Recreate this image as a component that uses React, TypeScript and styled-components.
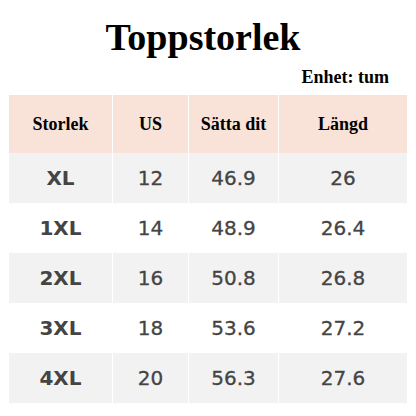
import React from "react";
import styled, { createGlobalStyle } from "styled-components";

const Global = createGlobalStyle`
  html, body { margin: 0; padding: 0; background: #ffffff; }
  body { width: 416px; height: 416px; overflow: hidden; }
`;

const Page = styled.div`
  width: 416px;
  height: 416px;
  box-sizing: border-box;
  padding: 18px 9px 0 9px;
  display: flex;
  flex-direction: column;
`;

const Title = styled.h1`
  margin: 0;
  padding-right: 10px;
  font-family: "Liberation Serif", "Times New Roman", serif;
  font-weight: 700;
  font-size: 38px;
  line-height: 38px;
  color: #000;
  text-align: center;
`;

const Unit = styled.div`
  margin-top: 12px;
  padding-right: 18px;
  font-family: "Liberation Serif", "Times New Roman", serif;
  font-weight: 700;
  font-size: 18px;
  line-height: 18px;
  color: #000;
  text-align: right;
`;

const Table = styled.div`
  margin-top: 9px;
  display: flex;
  flex-direction: column;
`;

const Row = styled.div<{ $head?: boolean }>`
  display: grid;
  grid-template-columns: 103px 75px 89px 128px;
  column-gap: 1px;
  height: ${(p) => (p.$head ? 58 : 50)}px;
`;

const Cell = styled.div<{ $bg: string; $head?: boolean; $bold?: boolean }>`
  background: ${(p) => p.$bg};
  display: flex;
  align-items: center;
  justify-content: center;
  font-family: ${(p) =>
    p.$head ? `"Liberation Serif", "Times New Roman", serif` : `"DejaVu Sans", sans-serif`};
  font-weight: ${(p) => (p.$head || p.$bold ? 700 : 400)};
  font-size: ${(p) => (p.$head ? 18 : 20)}px;
  color: ${(p) => (p.$head ? "#000" : "#444444")};
  -webkit-text-stroke: ${(p) => (p.$head || p.$bold ? "0" : "0.3px #444444")};
`;

const headers = ["Storlek", "US", "Sätta dit", "Längd"];
const rows = [
  ["XL", "12", "46.9", "26"],
  ["1XL", "14", "48.9", "26.4"],
  ["2XL", "16", "50.8", "26.8"],
  ["3XL", "18", "53.6", "27.2"],
  ["4XL", "20", "56.3", "27.6"],
];

export default function App() {
  return (
    <>
      <Global />
      <Page>
        <Title>Toppstorlek</Title>
        <Unit>Enhet: tum</Unit>
        <Table>
          <Row $head>
            {headers.map((h) => (
              <Cell key={h} $head $bg="#f9e3d8">
                {h}
              </Cell>
            ))}
          </Row>
          {rows.map((r, i) => (
            <Row key={r[0]}>
              {r.map((c, j) => (
                <Cell key={j} $bold={j === 0} $bg={i % 2 === 0 ? "#f2f2f2" : "#ffffff"}>
                  {c}
                </Cell>
              ))}
            </Row>
          ))}
        </Table>
      </Page>
    </>
  );
}
